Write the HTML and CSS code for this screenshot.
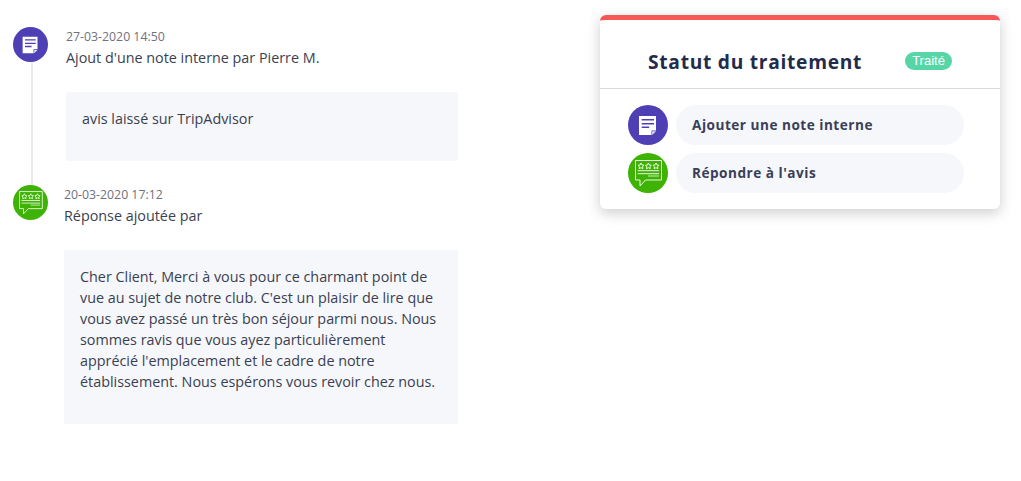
FILE: index.html
```html
<!DOCTYPE html>
<html lang="fr">
<head>
<meta charset="utf-8">
<title>Statut du traitement</title>
<link rel="stylesheet" href="styles.css">
</head>
<body>
<svg class="defs" width="0" height="0" aria-hidden="true">
  <symbol id="note" viewBox="0 0 40 40">
    <path d="M11 11h17v14.500h-4.500V30H11z" fill="#fff"/>
    <path d="M13.700 14.700H26M13.700 18.700H26M13.700 22.300h7.500" stroke="#4e3fb5" stroke-width="1.500" fill="none"/>
    <path d="M24.200 30v-3.800H28z" fill="#e4e2f5"/>
  </symbol>
  <symbol id="review" viewBox="0 0 40 40">
    <path d="M7.500 7.500h26v19.500H17.500l-5.500 6v-6H7.500z" fill="none" stroke="#fff" stroke-width=".9"/>
    <path d="M13 10l1 2 2 .3-1.500 1.400.4 2-1.900-1-1.900 1 .4-2-1.500-1.400 2-.3zM20.400 10l1 2 2 .3-1.500 1.400.4 2-1.900-1-1.900 1 .4-2-1.500-1.400 2-.3zM28 10l1 2 2 .3-1.500 1.400.4 2-1.900-1-1.900 1 .4-2-1.500-1.400 2-.3z" fill="none" stroke="#fff" stroke-width=".9"/>
    <path d="M9.700 17.700H31M9.700 20.700H31" stroke="#fff" stroke-width=".9"/>
    <path d="M20 23h11" stroke="#a6dc90" stroke-width="1.400"/>
  </symbol>
</svg>
<main class="page">
  <section class="timeline">
    <article class="entry entry-note">
      <div class="rail">
        <span class="avatar avatar-note"><svg class="icon"><use href="#note"/></svg></span>
        <span class="rail-line"></span>
      </div>
      <div class="entry-body">
        <div class="date">27-03-2020 14:50</div>
        <p class="summary">Ajout d'une note interne par Pierre M.</p>
        <div class="bubble bubble-note">avis laissé sur TripAdvisor</div>
      </div>
    </article>
    <article class="entry entry-reply">
      <div class="rail">
        <span class="avatar avatar-review"><svg class="icon"><use href="#review"/></svg></span>
      </div>
      <div class="entry-body">
        <div class="date">20-03-2020 17:12</div>
        <p class="summary">Réponse ajoutée par</p>
        <div class="bubble bubble-reply">Cher Client, Merci à vous pour ce charmant point de vue au sujet de notre club. C'est un plaisir de lire que vous avez passé un très bon séjour parmi nous. Nous sommes ravis que vous ayez particulièrement apprécié l'emplacement et le cadre de notre établissement. Nous espérons vous revoir chez nous.</div>
      </div>
    </article>
  </section>
  <aside class="panel">
    <header class="panel-head">
      <h2 class="panel-title">Statut du traitement</h2>
      <span class="badge">Traité</span>
    </header>
    <div class="actions">
      <div class="action">
        <span class="avatar avatar-lg avatar-note"><svg class="icon"><use href="#note"/></svg></span>
        <span class="pill">Ajouter une note interne</span>
      </div>
      <div class="action">
        <span class="avatar avatar-lg avatar-review"><svg class="icon"><use href="#review"/></svg></span>
        <span class="pill">Répondre à l'avis</span>
      </div>
    </div>
  </aside>
</main>
</body>
</html>
```

FILE: styles.css
```css
* { box-sizing: border-box; }
html, body { margin: 0; background: #fff; }
body { font-family: "Open Sans", "Liberation Sans", sans-serif; color: #3a3f51; }
.defs { display: block; height: 0; }
.page { display: flex; align-items: flex-start; width: 1021px; height: 481px; overflow: hidden; }

.timeline { width: 445px; margin-left: 13px; padding-top: 27px; flex: none; }
.entry { display: flex; }
.entry-note { height: 158px; }
.rail { width: 35px; flex: none; display: flex; flex-direction: column; align-items: center; }
.rail-line { width: 2px; flex: 1; background: #ebebef; margin-left: 2px; }
.avatar { display: block; width: 35px; height: 35px; border-radius: 50%; flex: none; }
.avatar-lg { width: 40px; height: 40px; }
.avatar-note { background: #4e3fb5; }
.avatar-review { background: #3eb303; }
.icon { display: block; width: 100%; height: 100%; }

.entry-body { flex: 1; min-width: 0; }
.entry-note .entry-body { margin-left: 18px; }
.entry-reply .entry-body { margin-left: 16px; }
.date { font-size: 12.3px; line-height: 18px; color: #6f7080; margin-top: 1px; }
.summary { margin: 2px 0 0; font-size: 14.35px; line-height: 19px; color: #3a3f51; }
.bubble { background: #f6f7fb; font-size: 14.35px; line-height: 21px; color: #3a3f51; }
.bubble-note { height: 69px; margin-top: 25px; padding: 16px; border-radius: 2px; }
.bubble-reply { height: 174px; margin-top: 25px; padding: 16px 16px 0; }

.panel { width: 400px; height: 194px; margin: 15px 0 0 142px; flex: none; background: #fff; border-top: 5px solid #f85757; border-radius: 6px; box-shadow: 0 4px 14px rgba(0, 0, 0, .2); }
.panel-head { height: 69px; border-bottom: 1px solid #dcdcdf; display: flex; align-items: center; padding: 15px 0 0 48px; }
.panel-title { margin: 0; width: 257px; font-size: 19.2px; line-height: 27px; font-weight: 700; letter-spacing: .72px; color: #232b4b; white-space: nowrap; }
.badge { width: 47px; height: 18px; margin-top: -1px; border-radius: 9px; background: #56d6a6; color: #fff; font-family: "Liberation Sans", Arial, sans-serif; font-size: 13px; line-height: 18px; text-align: center; }
.actions { display: flex; flex-direction: column; gap: 8px; padding: 16px 0 0 28px; }
.action { display: flex; align-items: center; gap: 8px; }
.pill { width: 288px; height: 40px; border-radius: 20px; background: #f6f7fb; padding-left: 16px; font-size: 13.6px; line-height: 40px; font-weight: 700; letter-spacing: .5px; color: #3a3f58; }
```
